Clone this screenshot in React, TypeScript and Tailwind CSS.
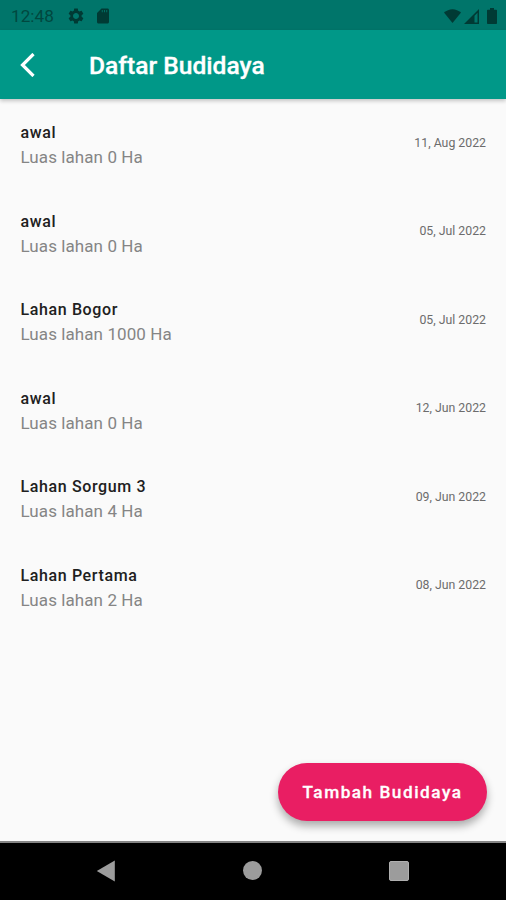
const items = [
  { name: 'awal', area: 'Luas lahan 0 Ha', date: '11, Aug 2022' },
  { name: 'awal', area: 'Luas lahan 0 Ha', date: '05, Jul 2022' },
  { name: 'Lahan Bogor', area: 'Luas lahan 1000 Ha', date: '05, Jul 2022' },
  { name: 'awal', area: 'Luas lahan 0 Ha', date: '12, Jun 2022' },
  { name: 'Lahan Sorgum 3', area: 'Luas lahan 4 Ha', date: '09, Jun 2022' },
  { name: 'Lahan Pertama', area: 'Luas lahan 2 Ha', date: '08, Jun 2022' },
];

function StatusBar() {
  return (
    <div className="flex h-[30px] shrink-0 items-center bg-[#00756a] pt-[2px] pr-[9px] pl-[11px] text-[#003a34]">
      <span className="w-[56px] pt-[2px] text-[17.200px] leading-none text-[#00483f]">12:48</span>
      <svg className="h-[18px] w-[18px]" viewBox="0 0 24 24" fill="currentColor">
        <path d="M19.43 12.98c.04-.32.07-.64.07-.98s-.03-.66-.07-.98l2.11-1.65c.19-.15.24-.42.12-.64l-2-3.46c-.12-.22-.39-.3-.61-.22l-2.49 1c-.52-.4-1.08-.73-1.69-.98l-.38-2.65C14.46 2.18 14.25 2 14 2h-4c-.25 0-.46.18-.49.42l-.38 2.65c-.61.25-1.17.59-1.69.98l-2.49-1c-.23-.09-.49 0-.61.22l-2 3.46c-.13.22-.07.49.12.64l2.11 1.65c-.04.32-.07.65-.07.98s.03.66.07.98l-2.11 1.65c-.19.15-.24.42-.12.64l2 3.46c.12.22.39.3.61.22l2.49-1c.52.4 1.08.73 1.69.98l.38 2.65c.03.24.24.42.49.42h4c.25 0 .46-.18.49-.42l.38-2.65c.61-.25 1.17-.59 1.69-.98l2.49 1c.23.09.49 0 .61-.22l2-3.46c.12-.22.07-.49-.12-.64l-2.11-1.65zM12 16c-2.200 0-4-1.800-4-4s1.800-4 4-4 4 1.800 4 4-1.800 4-4 4z" />
      </svg>
      <svg className="ml-[9px] h-[18px] w-[18px]" viewBox="0 0 24 24" fill="currentColor">
        <path d="M18 2h-8L4.02 8 4 20c0 1.1.9 2 2 2h12c1.1 0 2-.9 2-2V4c0-1.1-.9-2-2-2zm-6.400 5h-1.200V4h1.200v3zm3 0h-1.200V4h1.200v3zm3 0h-1.200V4h1.200v3z" />
      </svg>
      <div className="ml-auto flex items-center">
        <svg className="h-[14px] w-[17px]" viewBox="0 0 17 14" fill="currentColor">
          <path d="M8.5 14 0 3.6C2.4 1.5 5.4.2 8.5.2S14.600 1.500 17 3.600Z" />
        </svg>
        <svg className="ml-[3px] h-[15px] w-[15px]" viewBox="0 0 15 15" fill="currentColor">
          <path fillRule="evenodd" d="M0 15 15 0V15ZM10.500 13.500H13.500V3.700L10.500 6.700Z" />
        </svg>
        <svg className="ml-[8px] h-[16px] w-[10px]" viewBox="0 0 10 16" fill="currentColor">
          <path d="M3 0h4v1.800h2.200c.5 0 .8.3.8.8v12.600c0 .5-.3.8-.8.8H.8c-.5 0-.8-.3-.8-.8V2.600c0-.5.3-.8.8-.8H3Z" />
        </svg>
      </div>
    </div>
  );
}

function NavigationBar() {
  return (
    <div className="flex h-[59px] shrink-0 items-center justify-between border-t-2 border-[#858585] bg-black pr-[97px] pb-[2px] pl-[96px]">
      <svg className="h-[22px] w-[20px]" viewBox="0 0 20 22" fill="#9c9c9c">
        <path d="M18.800.500V21.500L.8 11Z" />
      </svg>
      <div className="size-[19px] rounded-full bg-[#9c9c9c]" />
      <div className="size-[20px] rounded-[2px] border border-[#b0b0b0] bg-[#9c9c9c]" />
    </div>
  );
}

export default function App() {
  return (
    <div className="flex h-[900px] w-[506px] flex-col overflow-hidden bg-[#fafafa] font-['Roboto',sans-serif]">
      <StatusBar />
      <header className="flex h-[69px] shrink-0 items-center bg-[#009888] pl-[20px] text-white shadow-[0_2px_4px_rgba(0,0,0,0.22)]">
        <svg className="h-[24px] w-[15px]" viewBox="0 0 15 24" fill="none" stroke="currentColor" strokeWidth="3.200">
          <path d="M13.500 1 2.500 12 13.500 23" />
        </svg>
        <h1 className="ml-[54px] pt-[3px] text-[24.600px] leading-none font-medium [-webkit-text-stroke:0.300px]">Daftar Budidaya</h1>
      </header>
      <main className="flex flex-1 flex-col">
        <ul>
          {items.map((item, index) => (
            <li key={index} className="flex h-[88.600px] items-start justify-between px-[20px] pt-[21px]">
              <div className="pl-[0.500px]">
                <p className="text-[16px] leading-[25px] font-medium tracking-[0.620px] text-[#202020]">{item.name}</p>
                <p className="text-[17px] leading-[25px] tracking-[0.080px] text-[#858585]">{item.area}</p>
              </div>
              <time className="pt-[12.500px] text-[12.300px] leading-[20px] text-[#6c6c6c]">{item.date}</time>
            </li>
          ))}
        </ul>
        <button className="mt-auto mr-[19px] mb-[20px] h-[58px] w-[209px] self-end rounded-full bg-[#e91e63] pt-[2px] text-[17.200px] font-medium tracking-[1.520px] text-white shadow-[0_5px_8px_rgba(0,0,0,0.32)] [-webkit-text-stroke:0.300px]">
          Tambah Budidaya
        </button>
      </main>
      <NavigationBar />
    </div>
  );
}
